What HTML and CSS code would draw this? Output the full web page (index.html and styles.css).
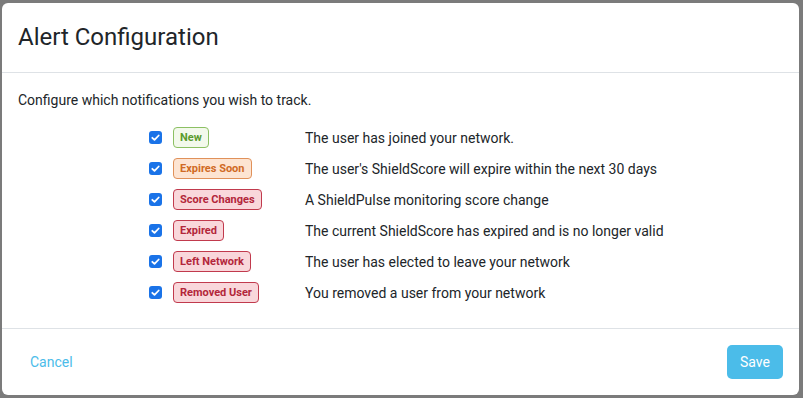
FILE: index.html
```html
<!DOCTYPE html>
<html lang="en">
<head>
    <meta charset="UTF-8">
    <meta name="viewport" content="width=device-width, initial-scale=1.0">
    <title>Alert Configuration</title>
    <link rel="stylesheet" href="styles.css">
</head>
<body>

<div class="modal">
    <!-- Header -->
    <div class="modal-header">
        <h2>Alert Configuration</h2>
    </div>

    <!-- Body -->
    <div class="modal-body">
        <p class="intro">Configure which notifications you wish to track.</p>

        <div class="alert-list">
            <span class="check"><svg viewBox="0 0 13 13"><path d="M3.3 6.8l2.2 2.1 4.2-4.4"/></svg></span>
            <span class="badge badge-green">New</span>
            <span class="desc">The user has joined your network.</span>

            <span class="check"><svg viewBox="0 0 13 13"><path d="M3.3 6.8l2.2 2.1 4.2-4.4"/></svg></span>
            <span class="badge badge-orange">Expires Soon</span>
            <span class="desc">The user's ShieldScore will expire within the next 30 days</span>

            <span class="check"><svg viewBox="0 0 13 13"><path d="M3.3 6.8l2.2 2.1 4.2-4.4"/></svg></span>
            <span class="badge badge-red">Score Changes</span>
            <span class="desc">A ShieldPulse monitoring score change</span>

            <span class="check"><svg viewBox="0 0 13 13"><path d="M3.3 6.8l2.2 2.1 4.2-4.4"/></svg></span>
            <span class="badge badge-red">Expired</span>
            <span class="desc">The current ShieldScore has expired and is no longer valid</span>

            <span class="check"><svg viewBox="0 0 13 13"><path d="M3.3 6.8l2.2 2.1 4.2-4.4"/></svg></span>
            <span class="badge badge-red">Left Network</span>
            <span class="desc">The user has elected to leave your network</span>

            <span class="check"><svg viewBox="0 0 13 13"><path d="M3.3 6.8l2.2 2.1 4.2-4.4"/></svg></span>
            <span class="badge badge-red">Removed User</span>
            <span class="desc">You removed a user from your network</span>
        </div>
    </div>

    <!-- Footer -->
    <div class="modal-footer">
        <button class="btn-link">Cancel</button>
        <button class="btn-save">Save</button>
    </div>
</div>

</body>
</html>
```

FILE: styles.css
```css
/* General Styles */
body {
    font-family: 'Roboto', 'Liberation Sans', sans-serif;
    background-color: #7b7b7b;
    margin: 0;
    height: 398px;
    overflow: hidden;
}

/* Modal */
.modal {
    width: 797px;
    height: 392px;
    margin: 3px 0 0 2px;
    background-color: #fff;
    border-radius: 6px;
    display: flex;
    flex-direction: column;
    color: #212529;
}

.modal-header {
    height: 69px;
    padding: 0 16px;
    display: flex;
    align-items: center;
    border-bottom: 1px solid #dee2e6;
}

.modal-header h2 {
    margin: 0;
    font-size: 24px;
    font-weight: 400;
    line-height: 1.2;
    color: #212529;
}

.modal-body {
    flex: 1;
    padding: 17px 16px 0;
    border-bottom: 1px solid #dee2e6;
}

.intro {
    margin: 0 0 12px;
    font-size: 14px;
    line-height: 20px;
}

/* Alert rows */
.alert-list {
    display: grid;
    grid-template-columns: 13px 121px auto;
    column-gap: 11px;
    grid-auto-rows: 31px;
    align-items: center;
    margin-left: 131px;
    font-size: 14px;
}

.check {
    width: 13px;
    height: 13px;
    border-radius: 3px;
    background-color: #1a73e8;
    display: block;
}

.check svg {
    display: block;
    width: 13px;
    height: 13px;
    fill: none;
    stroke: #fff;
    stroke-width: 1.8;
    stroke-linecap: round;
    stroke-linejoin: round;
}

.badge {
    justify-self: start;
    font-size: 11px;
    font-weight: 700;
    line-height: 19px;
    padding: 0 6px;
    border: 1px solid;
    border-radius: 4px;
}

.badge-green {
    color: #5a9b2c;
    background-color: #f3f9ec;
    border-color: #8cc063;
}

.badge-orange {
    color: #d06a25;
    background-color: #fde4d2;
    border-color: #e0915a;
}

.badge-red {
    color: #b3263a;
    background-color: #f9d7db;
    border-color: #c13a4d;
}

.desc {
    color: #212529;
}

/* Footer */
.modal-footer {
    height: 66px;
    padding: 0 16px;
    display: flex;
    align-items: center;
    justify-content: space-between;
}

.btn-link {
    background: none;
    border: none;
    padding: 0 12px;
    font-family: inherit;
    font-size: 14px;
    color: #4bbce9;
    cursor: pointer;
}

.btn-save {
    height: 34px;
    padding: 0 13px;
    background-color: #4bbce9;
    color: #fff;
    border: none;
    border-radius: 5px;
    font-family: inherit;
    font-size: 14px;
    cursor: pointer;
}
```
